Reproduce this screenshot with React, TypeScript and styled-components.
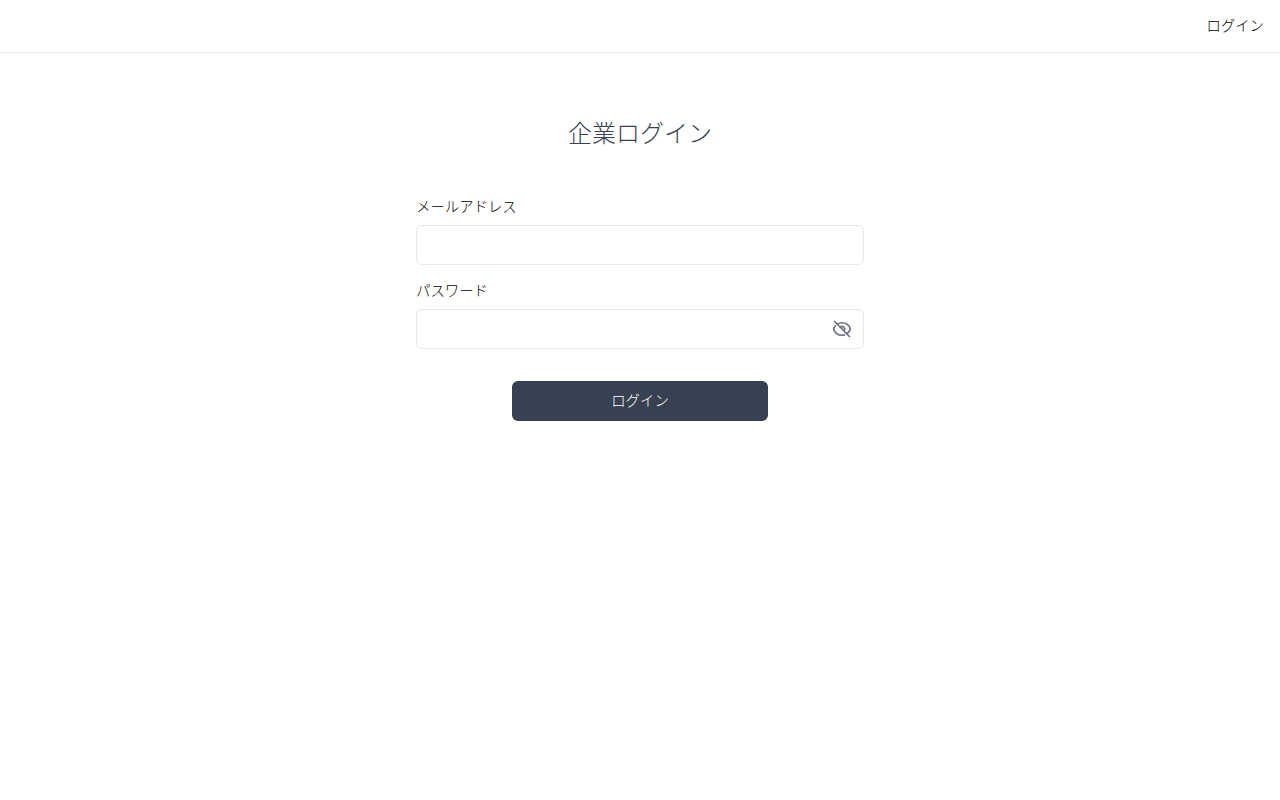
import styled, { createGlobalStyle } from "styled-components";

const GlobalStyle = createGlobalStyle`
  html, body {
    margin: 0;
    padding: 0;
    background: #fff;
  }
  body {
    font-family: "Noto Sans CJK JP", sans-serif;
    font-weight: 300;
    color: #000;
  }
  * {
    box-sizing: border-box;
  }
`;

const Header = styled.header`
  display: flex;
  justify-content: flex-end;
  align-items: center;
  height: 53px;
  padding: 0 16px 2px;
  border-bottom: 1px solid #e5e7eb;
`;

const HeaderLink = styled.a`
  font-size: 14.4px;
  line-height: 20px;
  color: #000;
  text-decoration: none;
`;

const Main = styled.main`
  display: flex;
  flex-direction: column;
  align-items: center;
  padding-top: 64px;
`;

const Title = styled.h1`
  margin: 0 0 50px;
  font-size: 24px;
  line-height: 30px;
  font-weight: 300;
  color: #374151;
`;

const Form = styled.form`
  display: flex;
  flex-direction: column;
  width: 448px;
`;

const Field = styled.div`
  display: flex;
  flex-direction: column;
  gap: 10px;
  margin-bottom: 16px;
`;

const Label = styled.label`
  font-size: 14.4px;
  line-height: 18px;
  color: #000;
`;

const InputWrap = styled.div`
  position: relative;
`;

const Input = styled.input`
  display: block;
  width: 100%;
  height: 40px;
  padding: 0 12px;
  border: 1px solid #e2e8f0;
  border-radius: 6px;
  background: #fff;
  font-size: 14px;
  outline: none;
`;

const EyeButton = styled.button`
  position: absolute;
  top: 10px;
  right: 12px;
  display: flex;
  width: 20px;
  height: 20px;
  padding: 0;
  border: 0;
  background: none;
  color: #6b7280;
`;

const SubmitButton = styled.button`
  align-self: center;
  width: 256px;
  height: 40px;
  margin-top: 16px;
  padding: 0 0 3px;
  border: 0;
  border-radius: 6px;
  background: #374151;
  color: #fff;
  font-family: inherit;
  font-weight: 300;
  font-size: 14.4px;
`;

function EyeSlashIcon() {
  return (
    <svg width="20" height="20" viewBox="0 0 24 24" fill="none" stroke="currentColor" strokeWidth="2" strokeLinecap="round" strokeLinejoin="round">
      <path d="M3.98 8.223A10.477 10.477 0 0 0 1.934 12C3.226 16.338 7.244 19.5 12 19.5c.993 0 1.953-.138 2.863-.395M6.228 6.228A10.451 10.451 0 0 1 12 4.5c4.756 0 8.773 3.162 10.065 7.498a10.522 10.522 0 0 1-4.293 5.774M6.228 6.228 3 3m3.228 3.228 3.65 3.65m7.894 7.894L21 21m-3.228-3.228-3.65-3.65m0 0a3 3 0 1 0-4.243-4.243m4.242 4.242L9.88 9.88" />
    </svg>
  );
}

export default function App() {
  return (
    <>
      <GlobalStyle />
      <Header>
        <HeaderLink href="#">ログイン</HeaderLink>
      </Header>
      <Main>
        <Title>企業ログイン</Title>
        <Form>
          <Field>
            <Label htmlFor="email">メールアドレス</Label>
            <Input id="email" type="email" />
          </Field>
          <Field>
            <Label htmlFor="password">パスワード</Label>
            <InputWrap>
              <Input id="password" type="password" />
              <EyeButton type="button" aria-label="toggle password">
                <EyeSlashIcon />
              </EyeButton>
            </InputWrap>
          </Field>
          <SubmitButton type="button">ログイン</SubmitButton>
        </Form>
      </Main>
    </>
  );
}
